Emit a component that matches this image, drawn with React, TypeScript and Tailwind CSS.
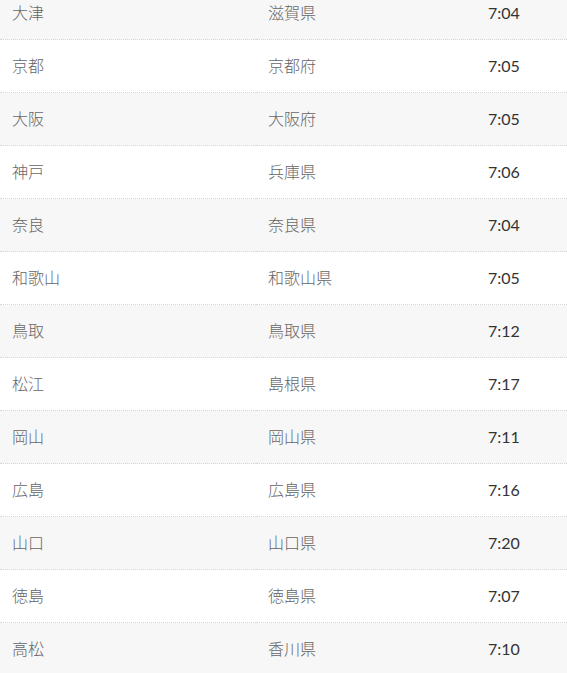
const rows: [string, string, string][] = [
  ['大津', '滋賀県', '7:04'],
  ['京都', '京都府', '7:05'],
  ['大阪', '大阪府', '7:05'],
  ['神戸', '兵庫県', '7:06'],
  ['奈良', '奈良県', '7:04'],
  ['和歌山', '和歌山県', '7:05'],
  ['鳥取', '鳥取県', '7:12'],
  ['松江', '島根県', '7:17'],
  ['岡山', '岡山県', '7:11'],
  ['広島', '広島県', '7:16'],
  ['山口', '山口県', '7:20'],
  ['徳島', '徳島県', '7:07'],
  ['高松', '香川県', '7:10'],
];

const cell = 'h-[53px] flex items-center px-3 border-b border-dotted border-[#d6d6d6]';
const jp = "font-['Noto_Sans_CJK_JP',sans-serif] font-light text-[#666]";

export default function App() {
  return (
    <div className="w-[567px] h-[673px] overflow-hidden bg-white">
      <div className="-mt-[13px] text-[16px] leading-6">
        {rows.map(([city, pref, time], i) => (
          <div
            key={city}
            className={`grid grid-cols-[256px_220px_1fr] ${i % 2 === 0 ? 'bg-[#f7f7f7]' : 'bg-white'}`}
          >
            <div className={`${cell} ${jp} pb-[2px]`}>{city}</div>
            <div className={`${cell} ${jp} pb-[2px]`}>{pref}</div>
            <div className={`${cell} font-['Lato',sans-serif] text-[#333]`}>{time}</div>
          </div>
        ))}
      </div>
    </div>
  );
}
